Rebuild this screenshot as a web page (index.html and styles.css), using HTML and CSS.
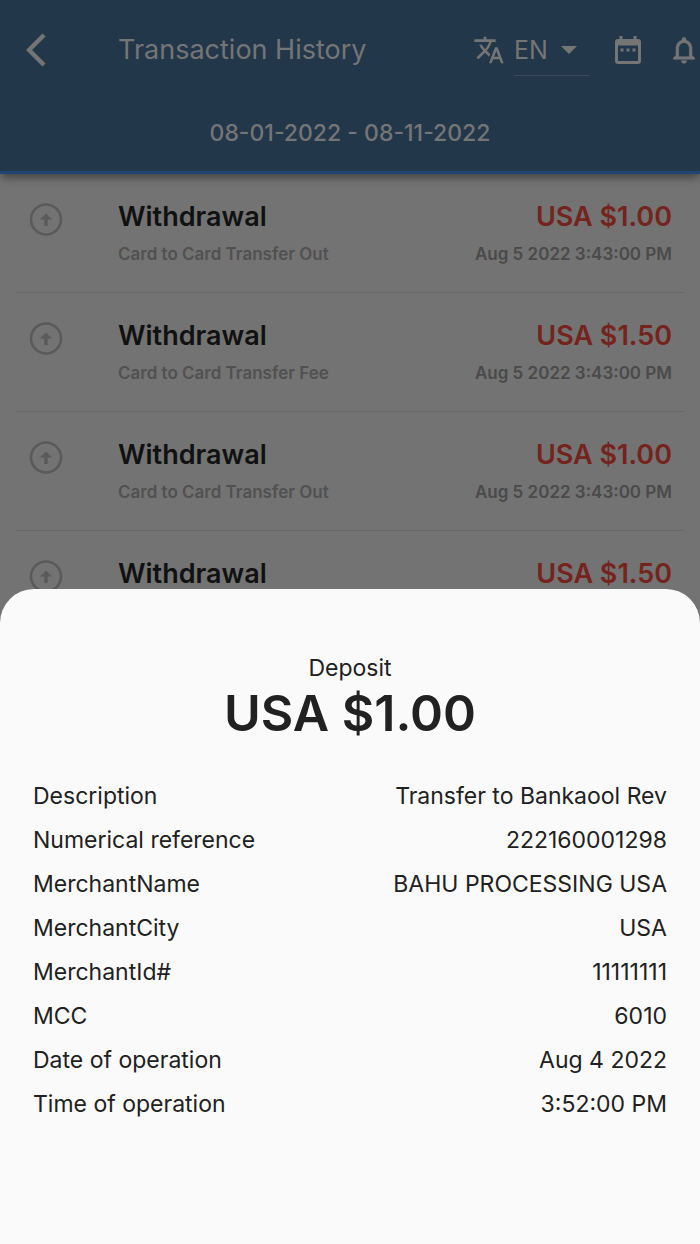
FILE: index.html
```html
<!DOCTYPE html>
<html lang="en">
<head>
<meta charset="utf-8">
<meta name="viewport" content="width=device-width, initial-scale=1">
<title>Transaction History</title>
<link rel="stylesheet" href="styles.css">
</head>
<body>
<div class="screen">
  <header class="header">
    <div class="toolbar">
      <button class="icon-button back" type="button" aria-label="Back">
        <svg width="20" height="34" viewBox="0 0 20 34"><path d="M18 2 3 17l15 15" fill="none" stroke="currentColor" stroke-width="4.400"/></svg>
      </button>
      <h1 class="title">Transaction History</h1>
      <label class="language">
        <svg width="32" height="32" viewBox="0 0 24 24" fill="currentColor" aria-hidden="true"><path d="M12.87 15.07l-2.54-2.51.03-.03A17.52 17.52 0 0 0 14.07 6H17V4h-7V2H8v2H1v1.99h11.17C11.5 7.92 10.44 9.75 9 11.35 8.07 10.32 7.3 9.19 6.69 8h-2c.73 1.63 1.73 3.17 2.98 4.56l-5.09 5.02L4 19l5-5 3.11 3.11.76-2.04zM18.5 10h-2L12 22h2l1.12-3h4.75L21 22h2l-4.5-12zm-2.62 7l1.62-4.33L19.12 17h-3.24z"/></svg>
        <span class="select-wrap">
          <select class="select" aria-label="Language"><option>EN</option><option>ES</option></select>
          <svg class="caret" width="16" height="8" viewBox="0 0 16 8" aria-hidden="true"><path d="M0 0h16L8 8z" fill="currentColor"/></svg>
        </span>
      </label>
      <button class="icon-button calendar" type="button" aria-label="Choose dates">
        <svg width="26" height="28" viewBox="0 0 26 28"><path fill="currentColor" fill-rule="evenodd" d="M4.500 0h3v3h11V0h3v3H23a3 3 0 0 1 3 3v19a3 3 0 0 1-3 3H3a3 3 0 0 1-3-3V6a3 3 0 0 1 3-3h1.500zM3 9.500v15.500h20v-15.500zM5.500 12.500h3v3h-3zm6 0h3v3h-3zm6 0h3v3h-3z"/></svg>
      </button>
      <button class="icon-button" type="button" aria-label="Notifications">
        <svg width="32" height="32" viewBox="0 0 24 24"><path fill="currentColor" stroke="currentColor" stroke-width="0.400" d="M12 22c1.100 0 2-.9 2-2h-4c0 1.100.9 2 2 2zm6-6v-5c0-3.070-1.630-5.640-4.500-6.320V4c0-.83-.67-1.500-1.500-1.500s-1.500.67-1.500 1.500v.68C7.640 5.360 6 7.920 6 11v5l-2 2v1h16v-1l-2-2zm-2 1H8v-6c0-2.480 1.510-4.500 4-4.500s4 2.020 4 4.500v6z"/></svg>
      </button>
    </div>
    <p class="range">08-01-2022 - 08-11-2022</p>
  </header>
  <ul class="list">
    <li class="item">
      <svg class="badge" width="34" height="34" viewBox="0 0 34 34"><circle cx="17" cy="16.500" r="15" fill="none" stroke="currentColor" stroke-width="2.600"/><path d="M17 10.500l6 6h-4.300v6.500h-3.400v-6.500H11z" fill="currentColor"/></svg>
      <div class="entry"><strong class="kind">Withdrawal</strong><span class="note">Card to Card Transfer Out</span></div>
      <div class="entry entry-end"><strong class="amount">USA $1.00</strong><time class="time">Aug 5 2022 3:43:00 PM</time></div>
    </li>
    <li class="item">
      <svg class="badge" width="34" height="34" viewBox="0 0 34 34"><circle cx="17" cy="16.500" r="15" fill="none" stroke="currentColor" stroke-width="2.600"/><path d="M17 10.500l6 6h-4.300v6.500h-3.400v-6.500H11z" fill="currentColor"/></svg>
      <div class="entry"><strong class="kind">Withdrawal</strong><span class="note">Card to Card Transfer Fee</span></div>
      <div class="entry entry-end"><strong class="amount">USA $1.50</strong><time class="time">Aug 5 2022 3:43:00 PM</time></div>
    </li>
    <li class="item">
      <svg class="badge" width="34" height="34" viewBox="0 0 34 34"><circle cx="17" cy="16.500" r="15" fill="none" stroke="currentColor" stroke-width="2.600"/><path d="M17 10.500l6 6h-4.300v6.500h-3.400v-6.500H11z" fill="currentColor"/></svg>
      <div class="entry"><strong class="kind">Withdrawal</strong><span class="note">Card to Card Transfer Out</span></div>
      <div class="entry entry-end"><strong class="amount">USA $1.00</strong><time class="time">Aug 5 2022 3:43:00 PM</time></div>
    </li>
    <li class="item">
      <svg class="badge" width="34" height="34" viewBox="0 0 34 34"><circle cx="17" cy="16.500" r="15" fill="none" stroke="currentColor" stroke-width="2.600"/><path d="M17 10.500l6 6h-4.300v6.500h-3.400v-6.500H11z" fill="currentColor"/></svg>
      <div class="entry"><strong class="kind">Withdrawal</strong></div>
      <div class="entry entry-end"><strong class="amount">USA $1.50</strong></div>
    </li>
  </ul>
</div>
<div class="overlay">
  <section class="sheet" role="dialog" aria-labelledby="sheet-title">
    <h2 class="sheet-title" id="sheet-title">Deposit</h2>
    <p class="sheet-amount">USA $1.00</p>
    <dl class="details">
      <div class="detail"><dt>Description</dt><dd>Transfer to Bankaool Rev</dd></div>
      <div class="detail"><dt>Numerical reference</dt><dd>222160001298</dd></div>
      <div class="detail"><dt>MerchantName</dt><dd>BAHU PROCESSING USA</dd></div>
      <div class="detail"><dt>MerchantCity</dt><dd>USA</dd></div>
      <div class="detail"><dt>MerchantId#</dt><dd>11111111</dd></div>
      <div class="detail"><dt>MCC</dt><dd>6010</dd></div>
      <div class="detail"><dt>Date of operation</dt><dd>Aug 4 2022</dd></div>
      <div class="detail"><dt>Time of operation</dt><dd>3:52:00 PM</dd></div>
    </dl>
  </section>
</div>
</body>
</html>
```
FILE: styles.css
```css
* {
  box-sizing: border-box;
}

body,
h1,
h2,
p,
ul,
dl,
dd {
  margin: 0;
  padding: 0;
}

body {
  background: #737373;
  font-family: Inter, "Liberation Sans", sans-serif;
}

.header {
  padding-top: 16px;
  background: #23374b;
  border-bottom: 3px solid #1f4572;
  box-shadow: 0 5px 8px -1px rgba(0, 0, 0, 0.4);
  color: #757575;
}

.toolbar {
  display: flex;
  align-items: center;
  height: 68px;
  padding-left: 26px;
}

.icon-button {
  display: flex;
  padding: 0;
  border: 0;
  background: none;
  color: inherit;
}

.back {
  width: 92px;
}

.title {
  flex: 1;
  font-size: 27px;
  font-weight: 400;
  line-height: 32px;
  white-space: nowrap;
}

.language {
  display: flex;
  align-items: center;
  gap: 9px;
}

.select-wrap {
  display: flex;
  align-items: center;
  width: 75px;
  height: 52px;
  border-bottom: 1px solid #3b4a5a;
}

.select {
  width: 47px;
  padding: 0;
  border: 0;
  appearance: none;
  background: none;
  color: inherit;
  font: 400 25px/32px Inter, "Liberation Sans", sans-serif;
}

.calendar {
  margin: 0 27px 0 26px;
}

.range {
  padding: 34px 0 23px;
  font-size: 23px;
  font-weight: 500;
  line-height: 30px;
  text-align: center;
}

.list {
  padding: 0 16px;
  list-style: none;
}

.item {
  display: flex;
  height: 119px;
  padding: 26px 12px 0 13px;
  border-bottom: 1px solid #686868;
}

.badge {
  margin: 3px 55px 0 0;
  color: #5a5a5a;
}

.entry {
  display: flex;
  flex: 1;
  flex-direction: column;
  gap: 8px;
}

.entry-end {
  align-items: flex-end;
}

.kind,
.amount {
  color: #111111;
  font-size: 27px;
  font-weight: 600;
  line-height: 34px;
}

.amount {
  color: #74241d;
}

.note,
.time {
  color: #515151;
  font-size: 17px;
  font-weight: 600;
  line-height: 24px;
}

.time {
  color: #4a4a4a;
}

.overlay {
  position: fixed;
  inset: 0;
  display: flex;
  align-items: flex-end;
}

.sheet {
  flex: 1;
  padding: 63px 33px 118px;
  border-radius: 34px 34px 0 0;
  background: #fafafa;
  color: #212121;
}

.sheet-title {
  font-size: 23px;
  font-weight: 400;
  line-height: 32px;
  text-align: center;
}

.sheet-amount {
  margin-bottom: 32px;
  font-size: 50px;
  font-weight: 600;
  line-height: 58px;
  text-align: center;
}

.detail {
  display: flex;
  justify-content: space-between;
  font-size: 23px;
  line-height: 44px;
}
```
